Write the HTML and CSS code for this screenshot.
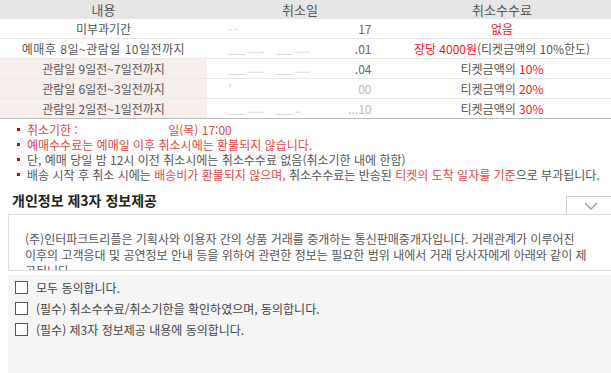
FILE: index.html
```html
<!DOCTYPE html>
<html lang="ko">
<head>
<meta charset="utf-8">
<link rel="stylesheet" href="styles.css">
</head>
<body>
<table class="fee">
  <colgroup><col class="w1"><col class="w2"><col class="w3"></colgroup>
  <thead>
    <tr><th>내용</th><th>취소일</th><th>취소수수료</th></tr>
  </thead>
  <tbody>
    <tr><td>미부과기간</td><td><span class="date"><span class="fade">- -</span><span class="dk">17</span></span></td><td><span class="red">없음</span></td></tr>
    <tr><td class="wide">예매후 8일~관람일 10일전까지</td><td><span class="date"><span class="fade">___ ......&nbsp;&nbsp;&nbsp;&nbsp;___ .....</span><span class="dk">.01</span></span></td><td><span class="red">장당 4000원</span>(티켓금액의 10%한도)</td></tr>
    <tr class="pink"><td>관람일 9일전~7일전까지</td><td><span class="date"><span class="fade">___ ......&nbsp;&nbsp;&nbsp;&nbsp;___ .....</span><span class="dk">.04</span></span></td><td>티켓금액의 <span class="red">10%</span></td></tr>
    <tr class="pink"><td>관람일 6일전~3일전까지</td><td><span class="date"><span class="fade">'</span><span class="dk lt">00</span></span></td><td>티켓금액의 <span class="red">20%</span></td></tr>
    <tr class="pink"><td>관람일 2일전~1일전까지</td><td><span class="date"><span class="fade">___ ......&nbsp;&nbsp;&nbsp;&nbsp;___ ..</span><span class="dk lt">...10</span></span></td><td>티켓금액의 <span class="red">30%</span></td></tr>
  </tbody>
</table>

<ul class="notes">
  <li class="rd">취소기한 : <span class="gap"></span>일(목) 17:00</li>
  <li class="rd">예매수수료는 예매일 이후 취소시에는 환불되지 않습니다.</li>
  <li>단, 예매 당일 밤 12시 이전 취소시에는 취소수수료 없음(취소기한 내에 한함)</li>
  <li>배송 시작 후 취소 시에는 <span class="rd">배송비가 환불되지 않으며,</span> 취소수수료는 반송된 <span class="rd">티켓의 도착 일자를 기준</span>으로 부과됩니다.</li>
</ul>

<div class="head">
  <h3>개인정보 제3자 정보제공</h3>
  <button class="drop" type="button"><svg width="14" height="8" viewBox="0 0 14 8"><path d="M1 1 L7 7 L13 1" fill="none" stroke="#999" stroke-width="1.3"/></svg></button>
</div>

<div class="terms">
  <p>(주)인터파크트리플은 기획사와 이용자 간의 상품 거래를 중개하는 통신판매중개자입니다. 거래관계가 이루어진 이후의 고객응대 및 공연정보 안내 등을 위하여 관련한 정보는 필요한 범위 내에서 거래 당사자에게 아래와 같이 제공됩니다.</p>
</div>

<div class="agree">
  <label class="chk"><span class="box"></span>모두 동의합니다.</label>
  <label class="chk"><span class="box"></span>(필수) 취소수수료/취소기한을 확인하였으며, 동의합니다.</label>
  <label class="chk"><span class="box"></span>(필수) 제3자 정보제공 내용에 동의합니다.</label>
</div>
</body>
</html>
```

FILE: styles.css
```css
html, body { margin: 0; padding: 0; overflow: hidden; }
body {
  width: 611px;
  height: 373px;
  background: #fff;
  font-family: "Noto Sans CJK KR", "Noto Sans", sans-serif;
  font-size: 12px;
  color: #555;
}
.fee {
  width: 611px;
  border-collapse: collapse;
  table-layout: fixed;
}
.w1 { width: 207px; }
.w2 { width: 186px; }
.w3 { width: 218px; }
.fee th {
  height: 19px;
  padding: 0;
  background: #e6e6e6;
  font-weight: normal;
  font-size: 13px;
  line-height: 19px;
  color: #555;
}
.fee td {
  height: 18px;
  padding: 0;
  line-height: 18px;
  text-align: center;
  border-bottom: 1px solid #e8e8e8;
  white-space: nowrap;
}
.fee td.wide { letter-spacing: 0.5px; }
.fee tbody tr:last-child td { border-bottom: 1px solid #bbb; }
.fee .pink td:first-child { background: #f7eeee; }
.date {
  display: inline-flex;
  justify-content: space-between;
  width: 143px;
  text-align: left;
}
.fade { color: #c4c4c4; font-size: 10px; }
.dk { color: #667; }
.lt { color: #bbb; }
.red { color: #f0141e; }

.notes {
  list-style: none;
  margin: 0;
  padding: 3px 0 0 17px;
}
.notes li {
  position: relative;
  padding-left: 10px;
  height: 15px;
  line-height: 15px;
  white-space: nowrap;
  color: #555;
}
.notes li::before {
  content: "";
  position: absolute;
  left: 0;
  top: 6px;
  width: 3px;
  height: 3px;
  background: #c00;
}
.notes .rd { color: #e04848; }
.gap { display: inline-block; width: 87px; height: 1px; }

.head {
  display: flex;
  align-items: flex-end;
  justify-content: space-between;
  height: 32px;
  padding-left: 12px;
}
.head h3 {
  margin: 0 0 4px;
  font-size: 14px;
  font-weight: bold;
  color: #222;
  line-height: 20px;
}
.drop {
  width: 50px;
  height: 18px;
  margin: 0 -5px 0 0;
  padding: 0;
  border: 1px solid #ccc;
  border-bottom: none;
  background: #fff;
  display: flex;
  align-items: center;
  justify-content: center;
}
.terms {
  margin-left: 8px;
  width: 620px;
  height: 55px;
  border: 1px solid #ddd;
  overflow: hidden;
}
.terms p {
  margin: 0;
  padding: 16px 0 0 16px;
  width: 562px;
  line-height: 16px;
  color: #555;
}
.agree {
  margin: 4px 0 0 8px;
  height: 120px;
  background: #f5f5f5;
  padding: 2px 0 0 7px;
  display: flex;
  flex-direction: column;
}
.chk {
  display: flex;
  align-items: center;
  height: 21px;
  color: #444;
  font-size: 12px;
}
.box {
  width: 11px;
  height: 11px;
  border: 1px solid #555;
  background: #fff;
  margin-right: 8px;
}
```
